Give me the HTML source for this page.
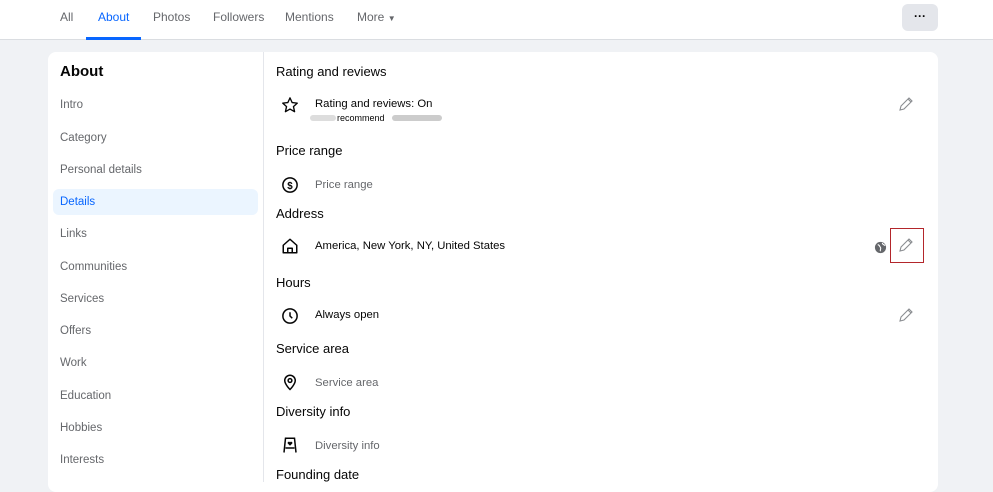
<!DOCTYPE html>
<html><head><style>
*{margin:0;padding:0;box-sizing:border-box}
body{width:993px;height:482px;overflow:hidden;background:#f0f2f5;font-family:"Liberation Sans",Arial,sans-serif;position:relative;color:#050505}
.top{position:absolute;left:0;top:0;width:993px;height:40px;background:#fff;border-bottom:1px solid #dadde1}
.nav{position:absolute;top:10px;font-size:12px;color:#65676b}
.ul{position:absolute;left:86px;top:37px;width:55px;height:3px;background:#0866ff}
.more{position:absolute;left:902px;top:4px;width:36px;height:27px;background:#e4e6eb;border-radius:6px;text-align:center;font-size:12px;font-weight:bold;line-height:24px}
.card{position:absolute;left:48px;top:52px;width:890px;height:440px;background:#fff;border-radius:8px}
.div{position:absolute;left:263px;top:52px;width:1px;height:430px;background:#e4e6eb}
.side{position:absolute;left:60px;font-size:11.5px;color:#65676b}
.sel{position:absolute;left:53px;top:189px;width:205px;height:26px;background:#ebf5ff;border-radius:6px}
.h{position:absolute;left:276px;font-size:13px;color:#050505}
.t{position:absolute;left:315px;font-size:11.3px}
.g{color:#65676b}
svg{position:absolute}
</style></head><body>
<div class="top"></div>
<div class="nav" style="left:60px">All</div>
<div class="nav" style="left:98px;color:#0866ff">About</div>
<div class="nav" style="left:153px">Photos</div>
<div class="nav" style="left:213px">Followers</div>
<div class="nav" style="left:285px">Mentions</div>
<div class="nav" style="left:357px">More <span style="font-size:8px">▼</span></div>
<div class="ul"></div>
<div class="more">···</div>
<div class="card"></div>
<div class="div"></div>
<div style="position:absolute;left:60px;top:63px;font-size:15px;font-weight:bold">About</div>
<div class="sel"></div>
<div class="side" style="top:99px">Intro</div>
<div class="side" style="top:132px">Category</div>
<div class="side" style="top:164px">Personal details</div>
<div class="side" style="top:196px;color:#0866ff">Details</div>
<div class="side" style="top:228px">Links</div>
<div class="side" style="top:261px">Communities</div>
<div class="side" style="top:293px">Services</div>
<div class="side" style="top:325px">Offers</div>
<div class="side" style="top:357px">Work</div>
<div class="side" style="top:390px">Education</div>
<div class="side" style="top:422px">Hobbies</div>
<div class="side" style="top:454px">Interests</div>

<div class="h" style="top:64px">Rating and reviews</div>
<svg style="left:281px;top:96px" width="18" height="18" viewBox="0 0 24 24"><path d="M12 2.5l2.9 6.3 6.8.7-5.1 4.6 1.5 6.8L12 17.4 5.9 20.9l1.5-6.8L2.3 9.5l6.8-.7z" fill="none" stroke="#050505" stroke-width="1.8" stroke-linejoin="round"/></svg>
<div class="t" style="top:98px">Rating and reviews: On</div>
<div style="position:absolute;left:310px;top:115px;width:26px;height:6px;background:#ddd;border-radius:3px"></div>
<div class="t" style="left:337px;top:113px;font-size:9px">recommend</div>
<div style="position:absolute;left:392px;top:115px;width:50px;height:6px;background:#ccc;border-radius:3px"></div>
<svg style="left:898px;top:96px" width="16" height="16" viewBox="0 0 16 16"><path d="M2 14l1-4 8-8 3 3-8 8zM10 3l3 3" fill="none" stroke="#8a8d91" stroke-width="1.1"/></svg>

<div class="h" style="top:143px">Price range</div>
<svg style="left:281px;top:176px" width="18" height="18" viewBox="0 0 24 24"><circle cx="12" cy="12" r="9.5" fill="none" stroke="#050505" stroke-width="2"/><text x="12" y="17" font-size="13" font-weight="bold" text-anchor="middle" font-family="Liberation Sans">$</text></svg>
<div class="t g" style="top:179px">Price range</div>

<div class="h" style="top:206px">Address</div>
<svg style="left:281px;top:237px" width="18" height="18" viewBox="0 0 24 24"><path d="M3 11L12 3l9 8v10H3z M9 21v-6h6v6" fill="none" stroke="#050505" stroke-width="2" stroke-linejoin="round"/></svg>
<div class="t" style="top:240px">America, New York, NY, United States</div>
<svg style="left:874px;top:241px" width="13" height="13" viewBox="0 0 14 14"><circle cx="7" cy="7" r="6" fill="#65676b"/><path d="M4 4c2 0 2 2 3 3s-1 3 0 4M9 2c0 2 2 2 3 3" stroke="#fff" stroke-width="1.2" fill="none"/></svg>
<div style="position:absolute;left:890px;top:228px;width:34px;height:35px;border:1.5px solid #b3262b"></div>
<svg style="left:898px;top:237px" width="16" height="16" viewBox="0 0 16 16"><path d="M2 14l1-4 8-8 3 3-8 8zM10 3l3 3" fill="none" stroke="#8a8d91" stroke-width="1.1"/></svg>

<div class="h" style="top:275px">Hours</div>
<svg style="left:281px;top:307px" width="18" height="18" viewBox="0 0 24 24"><circle cx="12" cy="12" r="9.5" fill="none" stroke="#050505" stroke-width="2"/><path d="M12 7v5l3 3" fill="none" stroke="#050505" stroke-width="2"/></svg>
<div class="t" style="top:309px">Always open</div>
<svg style="left:898px;top:307px" width="16" height="16" viewBox="0 0 16 16"><path d="M2 14l1-4 8-8 3 3-8 8zM10 3l3 3" fill="none" stroke="#8a8d91" stroke-width="1.1"/></svg>

<div class="h" style="top:341px">Service area</div>
<svg style="left:281px;top:373px" width="18" height="18" viewBox="0 0 24 24"><path d="M12 22s-7-7-7-12a7 7 0 0114 0c0 5-7 12-7 12z" fill="none" stroke="#050505" stroke-width="2"/><circle cx="12" cy="10" r="2.5" fill="none" stroke="#050505" stroke-width="2"/></svg>
<div class="t g" style="top:377px">Service area</div>

<div class="h" style="top:404px">Diversity info</div>
<svg style="left:281px;top:436px" width="18" height="18" viewBox="0 0 24 24"><path d="M4 22L6 3h12l2 19M6 16h12" fill="none" stroke="#050505" stroke-width="2"/><path d="M12 13l-3-3a1.5 1.5 0 013-1.5A1.5 1.5 0 0115 10z" fill="#050505"/></svg>
<div class="t g" style="top:440px">Diversity info</div>

<div class="h" style="top:467px">Founding date</div>
</body></html>
